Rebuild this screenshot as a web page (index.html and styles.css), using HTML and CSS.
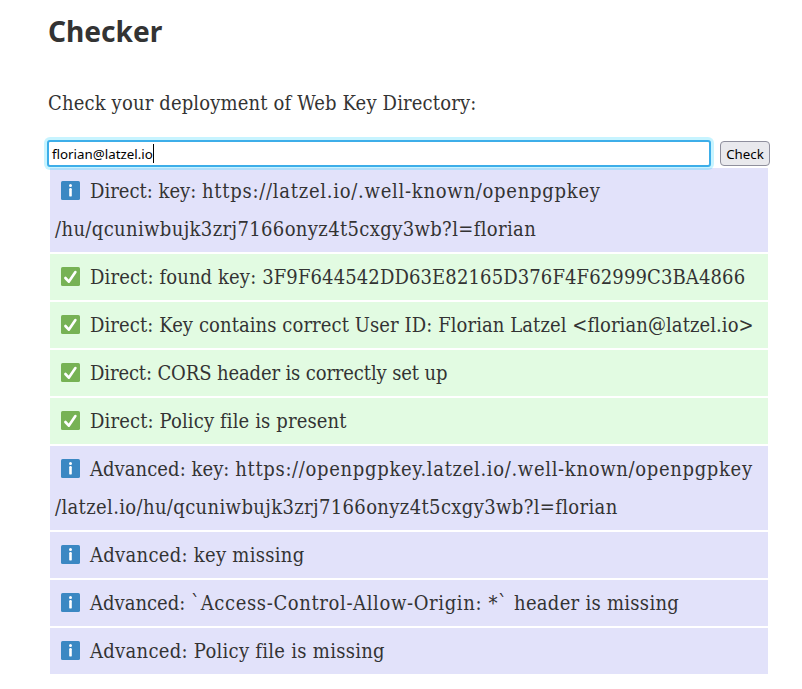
FILE: index.html
```
<!DOCTYPE html>
<html lang="en">
<head>
<meta charset="utf-8">
<title>Checker</title>
<link rel="stylesheet" href="styles.css">
</head>
<body>
<svg class="defs" aria-hidden="true">
  <symbol id="info" viewBox="0 0 19 19"><rect width="19" height="19" rx="1.6" fill="#3b88c3"/><circle cx="9.5" cy="4.6" r="1.5" fill="#fff"/><rect x="8.2" y="7" width="2.6" height="8.6" rx="1.2" fill="#fff"/></symbol>
  <symbol id="ok" viewBox="0 0 19 19"><rect width="19" height="19" rx="1.6" fill="#77b255"/><path d="M4.4 11l3.4 3.7L14.4 5" fill="none" stroke="#fff" stroke-width="2.6" stroke-linecap="round" stroke-linejoin="round"/></symbol>
</svg>
<main>
  <h2>Checker</h2>
  <p class="intro">Check your deployment of Web Key Directory:</p>
  <form class="form">
    <div class="field">florian@latzel.io<span class="caret"></span></div>
    <button type="button">Check</button>
  </form>
  <ul class="results">
    <li class="info"><svg class="icon"><use href="#info"/></svg>Direct: key: <span class="url-direct">https://latzel.io/.well-known/openpgpkey</span><br><span class="path">/hu/qcuniwbujk3zrj7166onyz4t5cxgy3wb?l=florian</span></li>
    <li class="ok"><svg class="icon"><use href="#ok"/></svg><span class="fingerprint">Direct: found key: 3F9F644542DD63E82165D376F4F62999C3BA4866</span></li>
    <li class="ok"><svg class="icon"><use href="#ok"/></svg><span class="user-id">Direct: Key contains correct User ID: Florian Latzel &lt;florian@latzel.io&gt;</span></li>
    <li class="ok"><svg class="icon"><use href="#ok"/></svg><span class="cors">Direct: CORS header is correctly set up</span></li>
    <li class="ok"><svg class="icon"><use href="#ok"/></svg><span class="policy">Direct: Policy file is present</span></li>
    <li class="info"><svg class="icon"><use href="#info"/></svg><span class="prefix">Advanced: key: </span><span class="url-advanced">https://openpgpkey.latzel.io/.well-known/openpgpkey</span><br><span class="path">/latzel.io/hu/qcuniwbujk3zrj7166onyz4t5cxgy3wb?l=florian</span></li>
    <li class="info"><svg class="icon"><use href="#info"/></svg><span class="missing">Advanced: key missing</span></li>
    <li class="info"><svg class="icon"><use href="#info"/></svg>Advanced: <span class="header-name">`Access-Control-Allow-Origin: *` </span><span class="missing">header is missing</span></li>
    <li class="info"><svg class="icon"><use href="#info"/></svg><span class="missing">Advanced: Policy file is missing</span></li>
  </ul>
</main>
</body>
</html>
```
FILE: styles.css
```
body { margin: 0; background: #fff; color: #333; }
.defs { position: absolute; width: 0; height: 0; }
main { padding: 12px 34px 0 48px; font: 20px/38px "DejaVu Serif Condensed", "DejaVu Serif", serif; }
h2 { margin: 0; font: bold 28.1px/38px "Noto Sans", sans-serif; }
.intro { margin: 34px 0 0; letter-spacing: .15px; }
.form { display: flex; align-items: center; gap: 9px; height: 27px; margin: 18px -2px 0 0; }
.field { position: relative; flex: none; display: flex; box-sizing: border-box; width: 664px; height: 27px; margin-left: -1px; padding-left: 3px; border: 2px solid #3daee9; border-radius: 3px; box-shadow: 0 0 0 3px rgba(0, 204, 255, .22); background: #fff; color: #000; font: 13.33px/24px "Noto Sans", sans-serif; }
.caret { width: 1px; height: 19px; margin-top: 2px; background: #000; }
button { box-sizing: border-box; width: 50px; height: 25px; padding: 0; border: 1px solid #8f8f9d; border-radius: 4px; background: #e9e9ed; color: #000; font: 13.33px/20px "Noto Sans", sans-serif; }
.results { display: grid; gap: 2px; width: 718px; margin: 1px 0 0 2px; padding: 0; list-style: none; }
.results li { padding: 4px 5px; white-space: nowrap; }
.info { background: #e2e2fa; }
.ok { background: #e2fbe2; }
.icon { width: 19px; height: 19px; margin: 0 10px 0 6px; vertical-align: -2px; }
.url-direct { letter-spacing: .73px; }
.url-advanced { letter-spacing: .67px; }
.path { letter-spacing: .36px; }
.fingerprint { letter-spacing: .12px; }
.user-id { letter-spacing: .08px; }
.cors { letter-spacing: -.13px; }
.policy { letter-spacing: .13px; }
.prefix { letter-spacing: .05px; }
.header-name { letter-spacing: .63px; }
.missing { letter-spacing: .28px; }
```
